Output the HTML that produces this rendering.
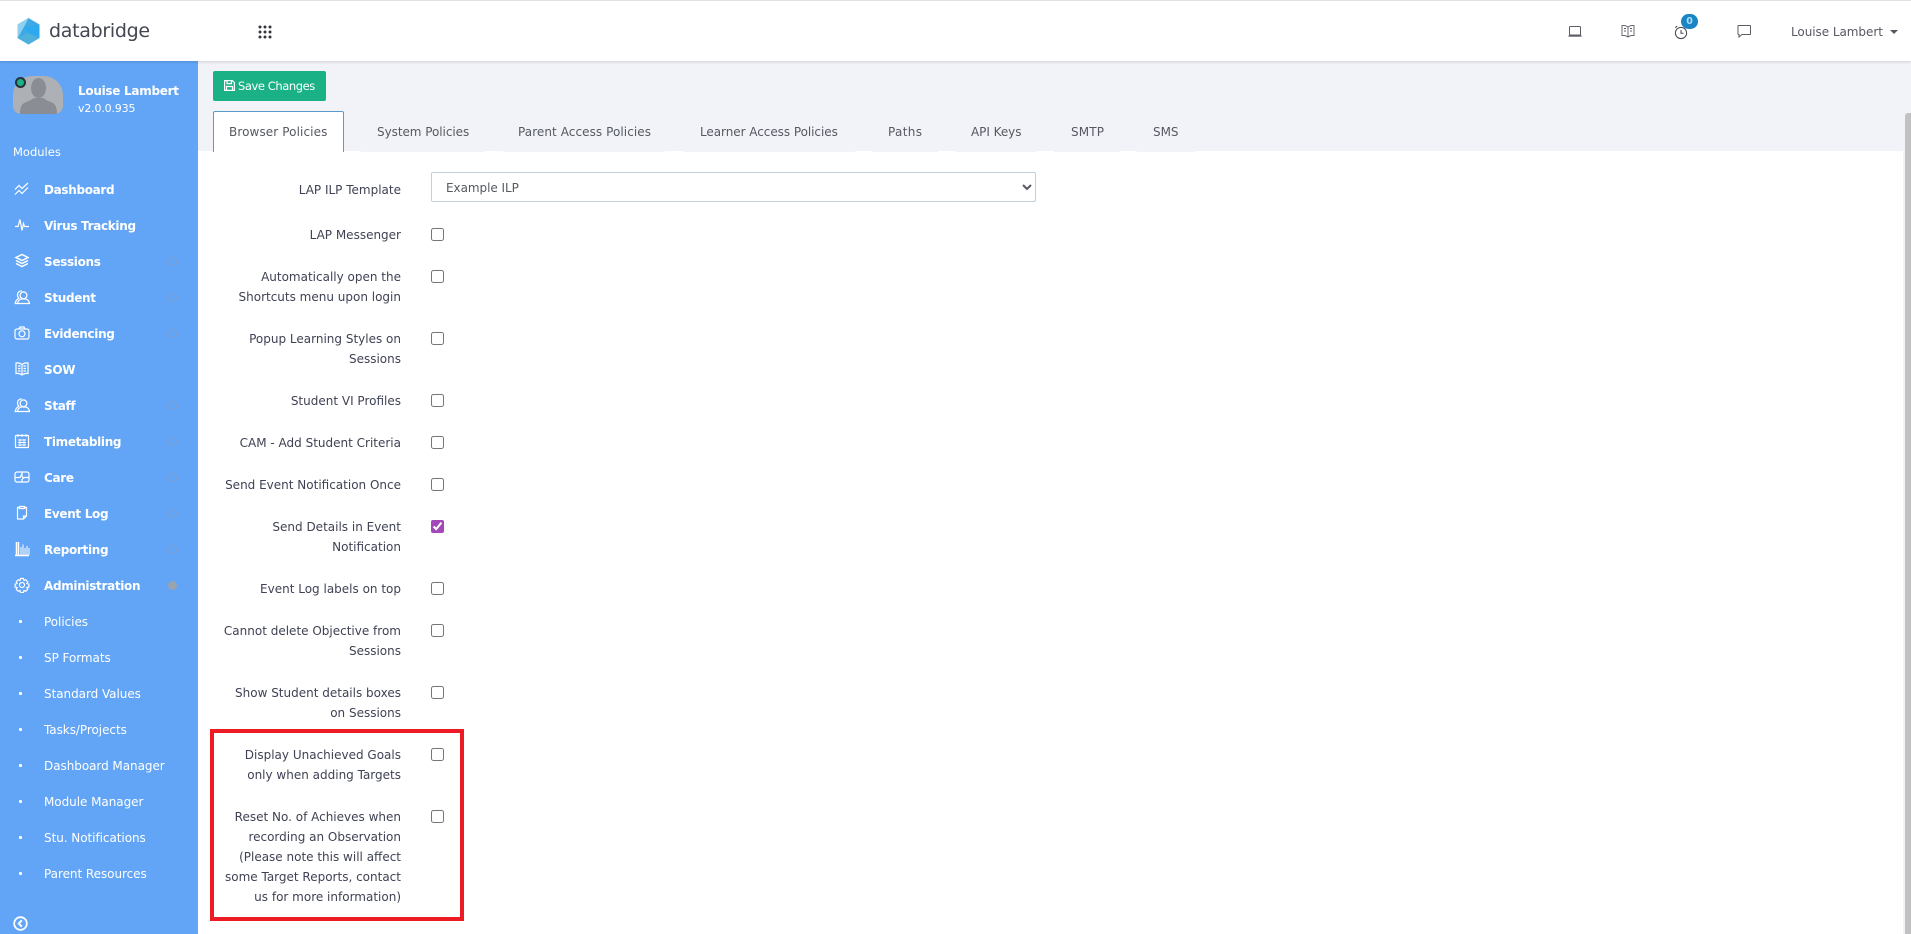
<!DOCTYPE html>
<html><head><meta charset="utf-8"><title>databridge</title>
<style>
*{box-sizing:border-box}
html,body{margin:0;padding:0;width:1911px;height:934px;overflow:hidden;background:#f1f3f8;font-family:"DejaVu Sans","Liberation Sans",sans-serif;font-size:12px;color:#3f4254}
div,span,svg,input,select{position:absolute}
#top{left:0;top:0;width:1911px;height:61px;background:#fff;border-top:1px solid #e2e2e2;box-shadow:0 1px 3px rgba(0,0,0,.15);z-index:3}
#side{left:0;top:61px;width:198px;height:873px;background:#62a5f6;color:#fff;z-index:2}
.m,.s{left:44px;white-space:nowrap;line-height:20px;color:#fff;margin-top:1px}
.m{font-weight:bold;letter-spacing:-.32px}
.s{letter-spacing:-.05px}
.d{left:168px;width:9px;height:9px;border-radius:50%;border:1px solid #7f9fd0}
.b{left:19px;width:3px;height:3px;background:#fff;border-radius:1px}
.ic{left:14px;width:16px;height:16px;fill:none;stroke:#fff;stroke-width:1.2}
.lb{left:0;width:401px;text-align:right;line-height:20px;white-space:nowrap;color:#3f4254;letter-spacing:0;margin-top:1px}
.cb{left:431px;width:13px;height:13px;margin:0}
.t{top:122px;line-height:20px;white-space:nowrap;color:#575962;letter-spacing:-.05px}
.u{top:150px;height:2px;background:#f1f3f8}
.ti{width:16px;height:16px;fill:none;stroke:#5a5c66;stroke-width:1}
</style></head><body>

<div id="top">
 <svg style="left:17px;top:17px;width:23px;height:27px" viewBox="0 0 23 27">
  <polygon points="11.5,0 22.5,6.5 22.5,20 11.5,26.5 .5,20 .5,6.5" fill="#3fa9e6"/>
  <polygon points="11.5,0 .5,6.5 .5,20 7,9" fill="#8fd0ee"/>
  <polygon points="7,9 22.5,6.5 22.5,20 11,15" fill="#2ea8ee"/>
  <polygon points="11,15 22.5,20 11.5,26.5 .5,20" fill="#4fb0dc"/>
 </svg>
 <div style="left:49px;top:16px;font-size:19px;line-height:28px;color:#444752;letter-spacing:-.3px;white-space:nowrap">databridge</div>
 <svg style="left:258px;top:24px;width:14px;height:14px" viewBox="0 0 14 14" fill="#33353d">
  <circle cx="2" cy="2" r="1.5"/><circle cx="7" cy="2" r="1.5"/><circle cx="12" cy="2" r="1.5"/>
  <circle cx="2" cy="7" r="1.5"/><circle cx="7" cy="7" r="1.5"/><circle cx="12" cy="7" r="1.5"/>
  <circle cx="2" cy="12" r="1.5"/><circle cx="7" cy="12" r="1.5"/><circle cx="12" cy="12" r="1.5"/>
 </svg>
 <svg class="ti" style="left:1567px;top:22px" viewBox="0 0 16 16"><rect x="2.5" y="3.5" width="11" height="8.5" rx=".8"/><path d="M1.500 13h13" stroke-width="1.400"/></svg>
 <svg class="ti" style="left:1620px;top:22px" viewBox="0 0 16 16"><path d="M8 4C6 2.500 4 2.200 2 2.500v10c2-.3 4 0 6 1.500 2-1.500 4-1.800 6-1.500v-10C12 2.200 10 2.500 8 4zM8 4v10M4 5.500h2M4 8h2M10 5.500h2M10 8h2" stroke-width=".9"/></svg>
 <svg class="ti" style="left:1673px;top:23px;stroke:#44464f" viewBox="0 0 16 16"><circle cx="8" cy="9" r="5.600"/><path d="M8 6v3.200h2.500M2.200 3.800l2-1.800M13.800 3.800l-2-1.800"/></svg>
 <div style="left:1681px;top:13px;width:17px;height:15px;border-radius:8px;background:#1a84c4;color:#a8e0ff;font-size:9.500px;font-weight:bold;line-height:15px;text-align:center">0</div>
 <svg class="ti" style="left:1736px;top:22px" viewBox="0 0 16 16"><path d="M2.500 2.500h11.500a.5.5 0 0 1 .5.5v8a.5.5 0 0 1-.5.5H6l-3 2.500v-2.500h-.5a.5.5 0 0 1-.5-.5V3a.5.5 0 0 1 .5-.5z"/></svg>
 <div style="left:1791px;top:20.500px;line-height:20px;white-space:nowrap;color:#575962;letter-spacing:-.05px">Louise Lambert</div>
 <div style="left:1890px;top:29px;width:0;height:0;border-left:4px solid transparent;border-right:4px solid transparent;border-top:4px solid #575962"></div>
</div>

<div id="side">
 <div style="left:13px;top:15px;width:50px;height:38px;border-radius:19px 19px 8px 8px;background:#adb0b5;overflow:hidden">
  <svg style="left:0;top:0;width:50px;height:38px" viewBox="0 0 50 38" fill="#8a8d93"><ellipse cx="25.500" cy="12" rx="7.500" ry="10"/><path d="M7 38c0-8 2-11 9-13l5-3h9l5 3c7 2 9 5 9 13z"/></svg>
 </div>
 <div style="left:15px;top:16px;width:11px;height:11px;border-radius:50%;background:#1cb287;border:2px solid #263238"></div>
 <div style="left:78px;top:20px;font-weight:bold;line-height:20px;white-space:nowrap;letter-spacing:-.28px">Louise Lambert</div>
 <div style="left:78px;top:38px;line-height:20px;white-space:nowrap;font-size:11px;letter-spacing:-.17px">v2.0.0.935</div>
 <div style="left:13px;top:81px;line-height:20px;white-space:nowrap;letter-spacing:0;font-size:11.500px">Modules</div>

 <svg class="ic" style="top:120px" viewBox="0 0 16 16"><path d="M1 8.500l4-4 3 3 6-5.500M1 13.500l4-4 3 3 6-6"/></svg>
 <div class="m" style="top:118px">Dashboard</div>
 <svg class="ic" style="top:156px" viewBox="0 0 16 16"><path d="M1 9.500h3l2-7 2 11 1.500-7 1 3h4.500"/></svg>
 <div class="m" style="top:154px">Virus Tracking</div>
 <svg class="ic" style="top:192px;stroke-width:1.500" viewBox="0 0 16 16"><path d="M8 1.500l6 3L8 7.500l-6-3zM2 7.500L8 10.500l6-3M2 10.500L8 13.500l6-3"/></svg>
 <div class="m" style="top:190px">Sessions</div><div class="d" style="top:196px"></div>
 <svg class="ic" style="top:228px" viewBox="0 0 16 16"><circle cx="9.500" cy="6.300" r="3.400"/><path d="M3.500 14.500c.2-2.500 1.500-3.600 3.500-4.500h5c2 .9 3.300 2 3.500 4.500zM7.800 2A3.800 3.800 0 0 0 3.500 6c0 1.500.6 2.500 1.400 3.200C2.600 10.500 1.500 12 1.200 14.500h2.300"/></svg>
 <div class="m" style="top:226px">Student</div><div class="d" style="top:232px"></div>
 <svg class="ic" style="top:264px" viewBox="0 0 16 16"><rect x="1" y="4" width="14" height="10" rx="2"/><circle cx="8" cy="8.800" r="3"/><path d="M5 4l1-2h4l1 2"/></svg>
 <div class="m" style="top:262px">Evidencing</div><div class="d" style="top:268px"></div>
 <svg class="ic" style="top:300px" viewBox="0 0 16 16"><path d="M8 3.500C6 2 4 1.700 2 2v10.500c2-.3 4 0 6 1.500 2-1.500 4-1.800 6-1.500V2C12 1.700 10 2 8 3.500zM8 3.500V14M4 5h2.500M4 7.500h2.500M4 10h2.500M9.500 5H12M9.500 7.500H12M9.500 10H12"/></svg>
 <div class="m" style="top:298px">SOW</div>
 <svg class="ic" style="top:336px" viewBox="0 0 16 16"><circle cx="9.500" cy="6.300" r="3.400"/><path d="M3.500 14.500c.2-2.500 1.500-3.600 3.500-4.500h5c2 .9 3.300 2 3.500 4.500zM7.800 2A3.800 3.800 0 0 0 3.500 6c0 1.500.6 2.500 1.400 3.200C2.600 10.500 1.500 12 1.200 14.500h2.300"/></svg>
 <div class="m" style="top:334px">Staff</div><div class="d" style="top:340px"></div>
 <svg class="ic" style="top:372px" viewBox="0 0 16 16"><rect x="1.500" y="2.500" width="13" height="12" rx=".5"/><path d="M4 1v3M8 1v3M12 1v3M4 7h8M4 9.500h8M4 12h8M6 6v7M10 6v7" stroke-width=".9"/></svg>
 <div class="m" style="top:370px">Timetabling</div><div class="d" style="top:376px"></div>
 <svg class="ic" style="top:408px" viewBox="0 0 16 16"><rect x="1" y="3" width="14" height="10" rx="2"/><path d="M1 8.500h5l1.500-3 1.500 4 1-1h5M8 3v3M8 10v3"/></svg>
 <div class="m" style="top:406px">Care</div><div class="d" style="top:412px"></div>
 <svg class="ic" style="top:444px" viewBox="0 0 16 16"><path d="M5.500 2.500H3.500v11.500h6l3-3V2.500h-2M5.500 1.500h5v2h-5zM9.500 14v-3h3"/></svg>
 <div class="m" style="top:442px">Event Log</div><div class="d" style="top:448px"></div>
 <svg class="ic" style="top:480px;stroke-width:1.500" viewBox="0 0 16 16"><path d="M1 14.500h14M2.500 1v13M4.500 1v13" /><path d="M7 6v8M9 3.500v10.500M11 7v7M13 5v9M15 7v7" stroke-width="1.400" stroke-opacity=".7"/></svg>
 <div class="m" style="top:478px">Reporting</div><div class="d" style="top:484px"></div>
 <svg class="ic" style="top:516px" viewBox="0 0 16 16"><circle cx="8" cy="8" r="2.500"/><path d="M6.500 1.500h3l.5 2 1.800-.8 2 2.100-.9 1.700 2 .5v3l-2 .5.900 1.700-2 2.100-1.800-.8-.5 2h-3l-.5-2-1.800.8-2-2.100.9-1.700-2-.5v-3l2-.5-.9-1.700 2-2.100 1.800.8z"/></svg>
 <div class="m" style="top:514px">Administration</div><div class="d" style="top:520px;background:#9aa3b0;border-color:#9aa3b0"></div>

 <div class="b" style="top:559px"></div><div class="s" style="top:549.500px">Policies</div>
 <div class="b" style="top:595px"></div><div class="s" style="top:585.500px">SP Formats</div>
 <div class="b" style="top:631px"></div><div class="s" style="top:621.500px">Standard Values</div>
 <div class="b" style="top:667px"></div><div class="s" style="top:657.500px">Tasks/Projects</div>
 <div class="b" style="top:703px"></div><div class="s" style="top:693.500px">Dashboard Manager</div>
 <div class="b" style="top:739px"></div><div class="s" style="top:729.500px">Module Manager</div>
 <div class="b" style="top:775px"></div><div class="s" style="top:765.500px">Stu. Notifications</div>
 <div class="b" style="top:811px"></div><div class="s" style="top:801.500px">Parent Resources</div>

 <svg style="left:13px;top:855px;width:15px;height:15px" viewBox="0 0 15 15" fill="none" stroke="#fff"><circle cx="7.500" cy="7.500" r="6.300" stroke-width="1.800"/><path d="M8.800 4.300L5.800 7.500l3 3.200" stroke-width="2"/></svg>
</div>

<div style="left:213px;top:71px;width:113px;height:30px;background:#1bb187;border-radius:2px"></div>
<svg style="left:224px;top:80px;width:11px;height:11px" viewBox="0 0 11 11" fill="none" stroke="#fff" stroke-width="1.200"><path d="M.6.600h7.800l2 2v7.800H.6zM3 .6v3h4.500v-3M2.500 10.400V6.500h6v3.900"/></svg>
<div style="left:238px;top:76px;line-height:20px;color:#fff;white-space:nowrap;font-size:11.500px;letter-spacing:-.42px">Save Changes</div>

<div style="left:198px;top:151px;width:1705px;height:783px;background:#fff"></div>
<div style="left:1905px;top:113px;width:6px;height:821px;background:#c1c1c1;border-radius:3px 0 0 0"></div>

<div class="u" style="left:361px;width:123px"></div><div class="u" style="left:503px;width:162px"></div><div class="u" style="left:684px;width:171px"></div><div class="u" style="left:872px;width:66px"></div><div class="u" style="left:955px;width:82px"></div><div class="u" style="left:1054px;width:66px"></div><div class="u" style="left:1137px;width:58px"></div>
<div style="left:213px;top:111px;width:131px;height:41px;background:#fff;border:1px solid #5b9bc9;border-bottom:0;border-radius:2px 2px 0 0"></div>
<div class="t" style="left:229px;letter-spacing:.1px">Browser Policies</div>
<div class="t" style="left:377px">System Policies</div>
<div class="t" style="left:518px;letter-spacing:.07px">Parent Access Policies</div>
<div class="t" style="left:700px">Learner Access Policies</div>
<div class="t" style="left:888px;letter-spacing:.35px">Paths</div>
<div class="t" style="left:971px">API Keys</div>
<div class="t" style="left:1071px;letter-spacing:.15px">SMTP</div>
<div class="t" style="left:1153px">SMS</div>

<div class="lb" style="top:179px">LAP ILP Template</div>
<select style="left:431px;top:172px;width:605px;height:30px;padding:2px 10px 0;background:#fff;border:1px solid #c4cfdc;border-radius:2px;font-family:inherit;font-size:12px;color:#575962;letter-spacing:-.05px"><option>Example ILP</option></select>
<div class="lb" style="top:224px">LAP Messenger</div><input class="cb" type="checkbox" style="top:228px">
<div class="lb" style="top:266px">Automatically open the<br>Shortcuts menu upon login</div><input class="cb" type="checkbox" style="top:270px">
<div class="lb" style="top:328px">Popup Learning Styles on<br>Sessions</div><input class="cb" type="checkbox" style="top:332px">
<div class="lb" style="top:390px">Student VI Profiles</div><input class="cb" type="checkbox" style="top:394px">
<div class="lb" style="top:432px">CAM - Add Student Criteria</div><input class="cb" type="checkbox" style="top:436px">
<div class="lb" style="top:474px">Send Event Notification Once</div><input class="cb" type="checkbox" style="top:478px">
<div class="lb" style="top:516px">Send Details in Event<br>Notification</div><input class="cb" type="checkbox" checked style="top:520px;accent-color:#a347ba">
<div class="lb" style="top:578px">Event Log labels on top</div><input class="cb" type="checkbox" style="top:582px">
<div class="lb" style="top:620px">Cannot delete Objective from<br>Sessions</div><input class="cb" type="checkbox" style="top:624px">
<div class="lb" style="top:682px">Show Student details boxes<br>on Sessions</div><input class="cb" type="checkbox" style="top:686px">
<div class="lb" style="top:744px">Display Unachieved Goals<br>only when adding Targets</div><input class="cb" type="checkbox" style="top:748px">
<div class="lb" style="top:806px">Reset No. of Achieves when<br>recording an Observation<br>(Please note this will affect<br>some Target Reports, contact<br>us for more information)</div><input class="cb" type="checkbox" style="top:810px">
<div style="left:210px;top:729px;width:254px;height:192px;border:4px solid #ed1c24"></div>
</body></html>
